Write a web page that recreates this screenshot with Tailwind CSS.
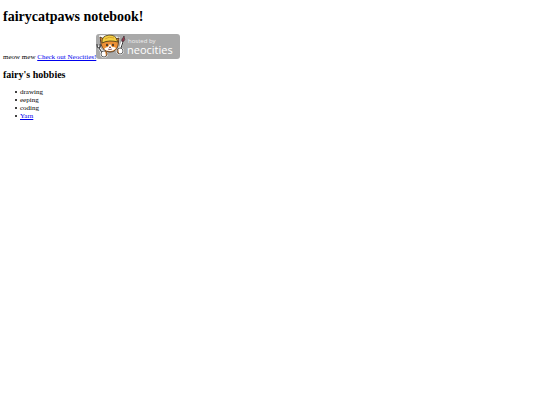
<!DOCTYPE html>
<html lang="en">
<head>
  <meta charset="UTF-8" />
  <meta name="viewport" content="width=device-width, initial-scale=1" />
  <title>fairycatpaws notebook!</title>
  <script src="https://cdn.jsdelivr.net/npm/@tailwindcss/browser@4"></script>
</head>
<body class="bg-white px-[3px] pt-[9px] font-['Liberation_Serif',serif] text-[7px] leading-[8px] text-black">
  <h1 class="text-[14px] leading-[16px] font-bold">fairycatpaws notebook!</h1>

  <p class="mt-[9px]">
    meow mew
    <a href="https://neocities.org" class="text-[#0000ee] underline">Check out Neocities!<!-- Neocities badge --><svg class="inline-block h-[25px] w-[84px] align-baseline" viewBox="0 0 84 25" role="img" aria-label="hosted by neocities">
        <rect width="84" height="25" rx="3" fill="#a9a9a9" />
        <g stroke="#fff" stroke-width="1.6" stroke-linejoin="round" fill="#fff">
          <path d="M5 8 4 2l5 0q5-2 10 1l4 1-1 8q-2 5-8 5-7 0-8-5z" />
          <path d="M2 12l5 8M28 3l-4 12" stroke-width="2.4" />
          <circle cx="8" cy="20" r="3" />
          <circle cx="24" cy="17" r="3" />
        </g>
        <!-- wrench and brush -->
        <path d="M1 10q0 4 2 4 2-1 1-4M3 14l4 6" fill="none" stroke="#444" stroke-width="1.2" />
        <path d="M27 8l-3 9" stroke="#333" stroke-width="1" />
        <path d="M28 2q2 4-1 6-2 0-1-3z" fill="#94364b" stroke="#333" stroke-width=".7" />
        <!-- cat head -->
        <path d="M5 10 4 3l4 2h11l4-1-1 8q-2 6-8 6-7 0-9-8z" fill="#ed9137" stroke="#44301d" stroke-width=".9" />
        <path d="M8 15q2-2 4-2l2-3 2 3q3 0 4 1-2 3-6 3-4 0-6-2z" fill="#fff" />
        <path d="M6 9q-1-7 7-8 7 0 8 5l1 2q-4-1-8-1-4 0-8 2z" fill="#f4cf43" stroke="#51401a" stroke-width=".9" />
        <path d="M9 5q4-3 9-1" fill="none" stroke="#c88c22" stroke-width=".7" />
        <ellipse cx="11" cy="11" rx=".8" ry="1.3" fill="#222" />
        <ellipse cx="17" cy="11" rx=".8" ry="1.3" fill="#222" />
        <path d="M13 13h2l-1 1zM12 15q2 1 4 0" fill="#a33" stroke="#533" stroke-width=".5" />
        <!-- paws -->
        <circle cx="8" cy="20" r="3" fill="#fff" stroke="#444" stroke-width=".8" />
        <path d="M9 17q2 0 2 3l-1 2" fill="#ed9137" stroke="#754319" stroke-width=".7" />
        <circle cx="24" cy="17" r="3" fill="#fff" stroke="#444" stroke-width=".8" />
        <path d="M22 15q-1 3 1 5" fill="#ed9137" stroke="#754319" stroke-width=".7" />
        <text x="32" y="9" class="fill-[#eeeeee] font-['Open_Sans',sans-serif] text-[6px]">hosted by</text>
        <text x="31" y="20" class="fill-white font-['Open_Sans',sans-serif] text-[11px]">neocities</text>
      </svg></a>
  </p>

  <h2 class="mt-[8px] text-[10px] leading-[12px] font-bold">fairy's hobbies</h2>

  <ul class="mt-[7px] pl-[12px] *:flex *:items-center *:gap-[3px] *:before:size-[2px] *:before:rounded-full *:before:bg-black">
    <li>drawing</li>
    <li>eeping</li>
    <li>coding</li>
    <li><a href="#yarn" class="text-[#0000ee] underline">Yarn</a></li>
  </ul>
</body>
</html>
